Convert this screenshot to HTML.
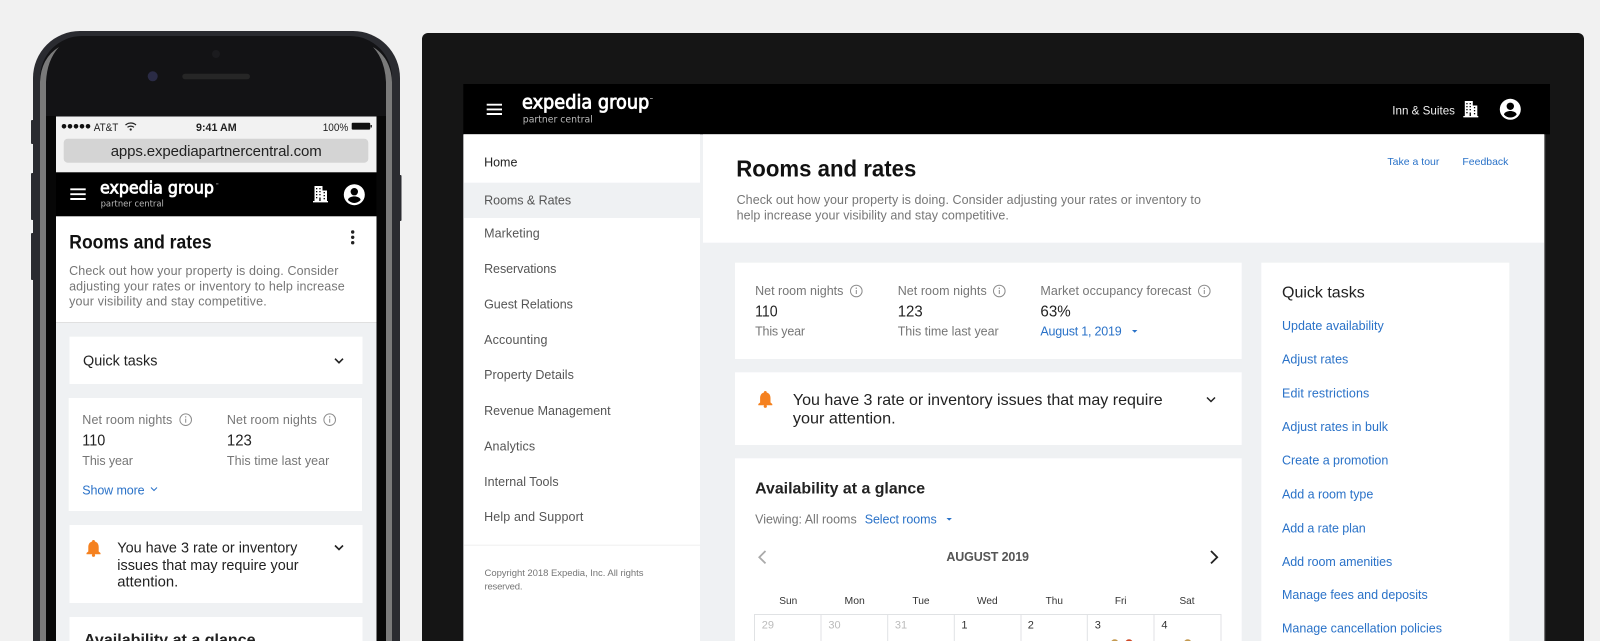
<!DOCTYPE html>
<html lang="en"><head><meta charset="utf-8"><title>Rooms and rates</title>
<style>
html,body{margin:0;padding:0;background:#f1f1f1;width:1600px;height:641px;overflow:hidden}
svg{display:block;filter:blur(.3px)}
text{font-family:"Liberation Sans",Arial,sans-serif;font-size:12.5px;fill:#222;transform:translateX(-.6px)}
.g{fill:#767676}.d{fill:#555}.b{fill:#2a72c8}
.h{font-weight:700;fill:#111}
.day{font-size:10.5px;fill:#333;text-anchor:middle}
.n{font-size:11px;fill:#333}.m{fill:#bbb}
.logo{font-family:"DejaVu Sans","Liberation Sans",sans-serif;fill:#fff;stroke:#fff;stroke-width:.8px}
.pc{font-family:"DejaVu Sans","Liberation Sans",sans-serif;fill:#b9b9b9}
</style></head><body>
<svg width="1600" height="641" viewBox="0 0 1600 641" xmlns="http://www.w3.org/2000/svg">
<defs>
<g id="bld"><path fill="#fff" d="M1.500 0h8v4.500H14V15h1v1.400H0V15h1.500z"/><g fill="#000"><rect x="3" y="2" width="1.300" height="1.300"/><rect x="6.300" y="2" width="1.300" height="1.300"/><rect x="3" y="5" width="1.300" height="1.300"/><rect x="6.300" y="5" width="1.300" height="1.300"/><rect x="10.600" y="6" width="1.300" height="1.300"/><rect x="3" y="8" width="1.300" height="1.300"/><rect x="6.300" y="8" width="1.300" height="1.300"/><rect x="10.600" y="9" width="1.300" height="1.300"/><rect x="3" y="11" width="1.300" height="1.300"/><rect x="10.600" y="12" width="1.300" height="1.300"/><rect x="6.300" y="11.500" width="1.300" height="3.500"/></g></g>
<g id="usr"><circle r="10.500" fill="#fff"/><circle cy="-3" r="3.700" fill="#000"/><path fill="#000" d="M-6.300 5.300c0-2.500 4-3.600 6.300-3.600s6.300 1.100 6.300 3.600a8.200 8.200 0 0 1-12.600 0z"/></g>
<g id="bell"><path fill="#f5811f" d="M7 0a1.400 1.400 0 0 1 1.400 1.500C11.200 2.200 12.200 4.600 12.200 7.200v4.300l1.800 1.500v1.200H0V13l1.800-1.500V7.200c0-2.600 1-5 3.800-5.700A1.400 1.400 0 0 1 7 0z"/><circle cx="7" cy="15.300" r="1.600" fill="#f5811f"/></g>
<g id="inf"><circle r="5.800" fill="none" stroke="#8c8c8c" stroke-width="1"/><rect x="-.5" y="-1" width="1" height="4" fill="#8c8c8c"/><circle cy="-2.800" r=".7" fill="#8c8c8c"/></g>
</defs>

<rect width="1600" height="641" fill="#f1f1f1"/>

<!-- PHONE -->
<g fill="#2b2c31"><rect x="31" y="120" width="3" height="24" rx="1"/><rect x="31" y="173" width="3" height="47" rx="1"/><rect x="31" y="233" width="3" height="47" rx="1"/><rect x="399" y="175" width="2.500" height="46" rx="1"/></g>
<path fill="#2a2b30" d="M33 641V78a47 47 0 0 1 47-47H353a47 47 0 0 1 47 47V641z"/>
<path fill="#131315" d="M40 641V78a42 42 0 0 1 42-42H350a42 42 0 0 1 42 42V641z"/>
<path fill="#7a7a7a" d="M59 47Q41 58 40 82V641H46V82Q47 60 59 47z"/>
<path fill="#7a7a7a" d="M373 47Q391 58 392 82V641H386V82Q385 60 373 47z"/>
<circle cx="216" cy="54" r="4" fill="#1b1b1e"/>
<circle cx="152.700" cy="76.300" r="5" fill="#2a2b45"/>
<rect x="182.300" y="73.700" width="67.700" height="5.600" rx="2.800" fill="#262626"/>
<rect x="46" y="116" width="10" height="525" fill="#070707"/><rect x="376.500" y="116" width="9.500" height="525" fill="#070707"/>

<rect x="56" y="116.500" width="320.500" height="56" fill="#f2f2f2"/>
<g fill="#111"><circle cx="64" cy="126.300" r="2.300"/><circle cx="70" cy="126.300" r="2.300"/><circle cx="76" cy="126.300" r="2.300"/><circle cx="82" cy="126.300" r="2.300"/><circle cx="88" cy="126.300" r="2.300"/></g>
<text x="94.300" y="131" style="font-size:11px" textLength="24.600" lengthAdjust="spacingAndGlyphs">AT&amp;T</text>
<g fill="none" stroke="#222" stroke-width="1.200"><path d="M125.500 125a8 8 0 0 1 10.500 0"/><path d="M127.500 127.300a5 5 0 0 1 6.500 0"/></g><circle cx="130.700" cy="129.500" r="1.100" fill="#222"/>
<text x="196.600" y="131" style="font-size:11px;font-weight:700" textLength="40.700" lengthAdjust="spacingAndGlyphs">9:41 AM</text>
<text x="323.300" y="131" style="font-size:11px" textLength="25.600" lengthAdjust="spacingAndGlyphs">100%</text>
<rect x="351.700" y="122.700" width="18.500" height="6.900" rx="1" fill="#111"/><rect x="370.500" y="125" width="1.500" height="2.500" fill="#333"/>
<rect x="63.700" y="138.700" width="304.600" height="24" rx="4" fill="#d4d4d4"/>
<text x="111.300" y="156" style="font-size:15px" textLength="211">apps.expediapartnercentral.com</text>

<rect x="56" y="172.300" width="320.500" height="44" fill="#000"/>
<path stroke="#fff" stroke-width="1.900" d="M70.300 189.300h15.400M70.300 194.200h15.400M70.300 199h15.400"/>
<text class="logo" x="100.600" y="193.300" style="font-size:16.500px" textLength="114" lengthAdjust="spacingAndGlyphs">expedia group</text>
<rect x="216" y="183.500" width="2.400" height=".8" fill="#aaa"/>
<text class="pc" x="101.200" y="206.700" style="font-size:8.800px" textLength="63.300" lengthAdjust="spacingAndGlyphs">partner central</text>
<use href="#bld" x="313" y="186"/>
<use href="#usr" x="354.300" y="194.700"/>

<rect x="56" y="216.300" width="320.500" height="106.500" fill="#fff"/>
<rect x="56" y="322.800" width="320.500" height="319" fill="#eff1f3"/>
<text class="h" x="69.900" y="248.300" style="font-size:19px" textLength="142.300" lengthAdjust="spacingAndGlyphs">Rooms and rates</text>
<g fill="#222"><circle cx="352.700" cy="232" r="1.700"/><circle cx="352.700" cy="237.300" r="1.700"/><circle cx="352.700" cy="242.700" r="1.700"/></g>
<text class="g" x="69.700" y="275" textLength="269.300">Check out how your property is doing. Consider</text>
<text class="g" x="69.700" y="290.300" textLength="275.600">adjusting your rates or inventory to help increase</text>
<text class="g" x="69.700" y="305.700" textLength="197.600">your visibility and stay competitive.</text>

<g fill="#fff">
<rect x="69.500" y="336.700" width="293" height="47.300"/>
<rect x="68.700" y="398" width="293.300" height="113"/>
<rect x="69.500" y="525" width="293" height="78"/>
<rect x="69.500" y="617" width="293" height="30"/>
</g>
<text x="83.600" y="365.700" style="font-size:14.400px" textLength="74.400" lengthAdjust="spacingAndGlyphs">Quick tasks</text>
<path fill="none" stroke="#222" stroke-width="1.600" d="M335 358.700l4 4 4-4"/>
<text class="g" x="82.900" y="424" textLength="90">Net room nights</text><use href="#inf" x="185.700" y="419.700"/>
<text class="g" x="227.500" y="424" textLength="90">Net room nights</text><use href="#inf" x="329.700" y="419.700"/>
<text x="82.900" y="445.700" style="font-size:16px" textLength="23" lengthAdjust="spacingAndGlyphs">110</text>
<text x="227.500" y="445.700" style="font-size:16px" textLength="25" lengthAdjust="spacingAndGlyphs">123</text>
<text class="g" x="82.900" y="465" textLength="50.600">This year</text>
<text class="g" x="227.500" y="465" textLength="102.400">This time last year</text>
<text class="b" x="82.900" y="494.300" textLength="62.300">Show more</text>
<path fill="none" stroke="#2a72c8" stroke-width="1" d="M151 487.500l3 3 3-3"/>
<use href="#bell" x="86.500" y="540"/>
<text x="117.900" y="552.700" style="font-size:14.800px" textLength="180" lengthAdjust="spacingAndGlyphs">You have 3 rate or inventory</text>
<text x="117.900" y="570" style="font-size:14.800px" textLength="181.300" lengthAdjust="spacingAndGlyphs">issues that may require your</text>
<text x="117.900" y="586.700" style="font-size:14.800px" textLength="61" lengthAdjust="spacingAndGlyphs">attention.</text>
<path fill="none" stroke="#222" stroke-width="1.600" d="M335 545.500l4 4 4-4"/>
<text class="h" x="84.500" y="645" style="font-size:16px;fill:#222" textLength="171.700" lengthAdjust="spacingAndGlyphs">Availability at a glance</text>

<!-- MONITOR -->
<path fill="#151515" d="M422 641V39a6 6 0 0 1 6-6H1578a6 6 0 0 1 6 6V641z"/>
<rect x="1544" y="134" width="1.200" height="507" fill="#777"/>
<rect x="463.300" y="84" width="1086.700" height="50.300" fill="#000"/>
<path stroke="#fff" stroke-width="1.900" d="M486.700 104.700h15.300M486.700 109.400h15.300M486.700 114h15.300"/>
<text class="logo" x="522.600" y="108.300" style="font-size:18.200px" textLength="127.300" lengthAdjust="spacingAndGlyphs">expedia group</text>
<rect x="650" y="98" width="2.800" height=".8" fill="#aaa"/>
<text class="pc" x="523.400" y="122.700" style="font-size:9.700px" textLength="70" lengthAdjust="spacingAndGlyphs">partner central</text>
<text x="1392.900" y="114.300" style="font-size:11.900px;fill:#eee" textLength="62.700" lengthAdjust="spacingAndGlyphs">Inn &amp; Suites</text>
<use href="#bld" x="1463.300" y="101"/>
<use href="#usr" x="1510.300" y="109.300"/>

<rect x="463.300" y="134.300" width="1080.700" height="507" fill="#eff1f3"/>
<rect x="464" y="134.300" width="236" height="507" fill="#fff"/>
<rect x="703" y="134.300" width="841" height="108.400" fill="#fff"/>
<rect x="464" y="182.700" width="236" height="35.300" fill="#eff1f3"/>

<text x="484.700" y="166.700" textLength="33.300">Home</text>
<text class="d" x="484.700" y="204.700" textLength="87">Rooms &amp; Rates</text>
<text class="d" x="484.700" y="237.300" textLength="55.600">Marketing</text>
<text class="d" x="484.700" y="272.800" textLength="72.300">Reservations</text>
<text class="d" x="484.700" y="308.300" textLength="88.800">Guest Relations</text>
<text class="d" x="484.700" y="343.800" textLength="63.300">Accounting</text>
<text class="d" x="484.700" y="378.800" textLength="89.800">Property Details</text>
<text class="d" x="484.700" y="414.800" textLength="126.500">Revenue Management</text>
<text class="d" x="484.700" y="450.300" textLength="51">Analytics</text>
<text class="d" x="484.700" y="485.800" textLength="74.500">Internal Tools</text>
<text class="d" x="484.700" y="521.200" textLength="99.300">Help and Support</text>
<rect x="464" y="544.700" width="236" height="1" fill="#efefef"/>
<text class="g" x="485.100" y="576" style="font-size:9.500px" textLength="159">Copyright 2018 Expedia, Inc. All rights</text>
<text class="g" x="485.100" y="589.500" style="font-size:9.500px" textLength="38">reserved.</text>

<text class="h" x="736.900" y="176.700" style="font-size:23.500px" textLength="180" lengthAdjust="spacingAndGlyphs">Rooms and rates</text>
<text class="g" x="737.200" y="204" textLength="464.300">Check out how your property is doing. Consider adjusting your rates or inventory to</text>
<text class="g" x="737.200" y="219.300" textLength="272.300">help increase your visibility and stay competitive.</text>
<text class="b" x="1388" y="165" style="font-size:10.500px" textLength="52" lengthAdjust="spacingAndGlyphs">Take a tour</text>
<text class="b" x="1463" y="165" style="font-size:10.500px" textLength="46" lengthAdjust="spacingAndGlyphs">Feedback</text>

<g fill="#fff">
<rect x="735" y="262.700" width="506.700" height="96.300"/>
<rect x="735" y="372.300" width="506.700" height="72.700"/>
<rect x="735" y="458.300" width="506.700" height="183"/>
<rect x="1261.300" y="262.700" width="248" height="379"/>
</g>
<text class="g" x="755.700" y="295" textLength="88.300">Net room nights</text><use href="#inf" x="856.300" y="291"/>
<text class="g" x="898.300" y="295" textLength="89">Net room nights</text><use href="#inf" x="999.300" y="291"/>
<text class="g" x="1041" y="295" textLength="151">Market occupancy forecast</text><use href="#inf" x="1204.300" y="291"/>
<text x="755.700" y="316.300" style="font-size:15.500px" textLength="22.600" lengthAdjust="spacingAndGlyphs">110</text>
<text x="898.300" y="316.300" style="font-size:15.500px" textLength="25" lengthAdjust="spacingAndGlyphs">123</text>
<text x="1041" y="316.300" style="font-size:15.500px" textLength="30.300" lengthAdjust="spacingAndGlyphs">63%</text>
<text class="g" x="755.700" y="335.700" textLength="50">This year</text>
<text class="g" x="898.300" y="335.700" textLength="101">This time last year</text>
<text class="b" x="1041" y="335.700" textLength="81.300">August 1, 2019</text>
<path fill="#2a72c8" d="M1132 330h5.400l-2.700 2.800z"/>
<use href="#bell" x="758.300" y="391"/>
<text x="793.500" y="405" style="font-size:15.800px" textLength="369.700" lengthAdjust="spacingAndGlyphs">You have 3 rate or inventory issues that may require</text>
<text x="793.500" y="423.300" style="font-size:15.800px" textLength="102.700" lengthAdjust="spacingAndGlyphs">your attention.</text>
<path fill="none" stroke="#222" stroke-width="1.500" d="M1207 397.500l4 4 4-4"/>

<text class="h" x="755.700" y="493.300" style="font-size:16px;fill:#222" textLength="170" lengthAdjust="spacingAndGlyphs">Availability at a glance</text>
<text class="g" x="755.700" y="523.300" textLength="101.600">Viewing: All rooms</text>
<text class="b" x="865.300" y="523.300" textLength="72">Select rooms</text>
<path fill="#2a72c8" d="M946.500 518h5.400l-2.700 2.600z"/>
<path fill="none" stroke="#aaa" stroke-width="1.800" d="M765.500 551l-6.200 6.200 6.200 6.200"/>
<path fill="none" stroke="#222" stroke-width="1.800" d="M1211 551l6.200 6.200-6.200 6.200"/>
<text x="947" y="561" style="font-size:12.500px;font-weight:700;fill:#555" textLength="82.600">AUGUST 2019</text>
<text class="day" x="788.900" y="604" textLength="18" lengthAdjust="spacingAndGlyphs">Sun</text>
<text class="day" x="855.300" y="604" textLength="20.300" lengthAdjust="spacingAndGlyphs">Mon</text>
<text class="day" x="921.600" y="604" textLength="17.300" lengthAdjust="spacingAndGlyphs">Tue</text>
<text class="day" x="987.900" y="604" textLength="20.700" lengthAdjust="spacingAndGlyphs">Wed</text>
<text class="day" x="1054.900" y="604" textLength="17.300" lengthAdjust="spacingAndGlyphs">Thu</text>
<text class="day" x="1121.300" y="604" textLength="11.700" lengthAdjust="spacingAndGlyphs">Fri</text>
<text class="day" x="1187.600" y="604" textLength="15" lengthAdjust="spacingAndGlyphs">Sat</text>
<path fill="none" stroke="#e0e2e4" stroke-width="1" d="M754.500 642V614.500H1221V642M821 614v28M887.700 614v28M954.300 614v28M1021 614v28M1087.300 614v28M1154 614v28"/>
<text class="n m" x="762.300" y="628.300">29</text>
<text class="n m" x="829" y="628.300">30</text>
<text class="n m" x="895.500" y="628.300">31</text>
<text class="n" x="962" y="628.300">1</text>
<text class="n" x="1028.300" y="628.300">2</text>
<text class="n" x="1095.300" y="628.300">3</text>
<text class="n" x="1162" y="628.300">4</text>
<circle cx="1114.700" cy="643.300" r="4" fill="#c49a50"/>
<circle cx="1129" cy="643.300" r="4" fill="#cf4a28"/>
<circle cx="1187.700" cy="643.300" r="4" fill="#c49a50"/>

<text x="1282.600" y="297.300" style="font-size:16px" textLength="82.700" lengthAdjust="spacingAndGlyphs">Quick tasks</text>
<text class="b" x="1282.600" y="330" textLength="101.700">Update availability</text>
<text class="b" x="1282.600" y="363.700" textLength="66.300">Adjust rates</text>
<text class="b" x="1282.600" y="397.300" textLength="87.300">Edit restrictions</text>
<text class="b" x="1282.600" y="431" textLength="106">Adjust rates in bulk</text>
<text class="b" x="1282.600" y="464.700" textLength="106.300">Create a promotion</text>
<text class="b" x="1282.600" y="498.700" textLength="91.300">Add a room type</text>
<text class="b" x="1282.600" y="532.300" textLength="83.700">Add a rate plan</text>
<text class="b" x="1282.600" y="566" textLength="110.300">Add room amenities</text>
<text class="b" x="1282.600" y="599" textLength="145.700">Manage fees and deposits</text>
<text class="b" x="1282.600" y="632.700" textLength="160">Manage cancellation policies</text>
</svg>
</body></html>
